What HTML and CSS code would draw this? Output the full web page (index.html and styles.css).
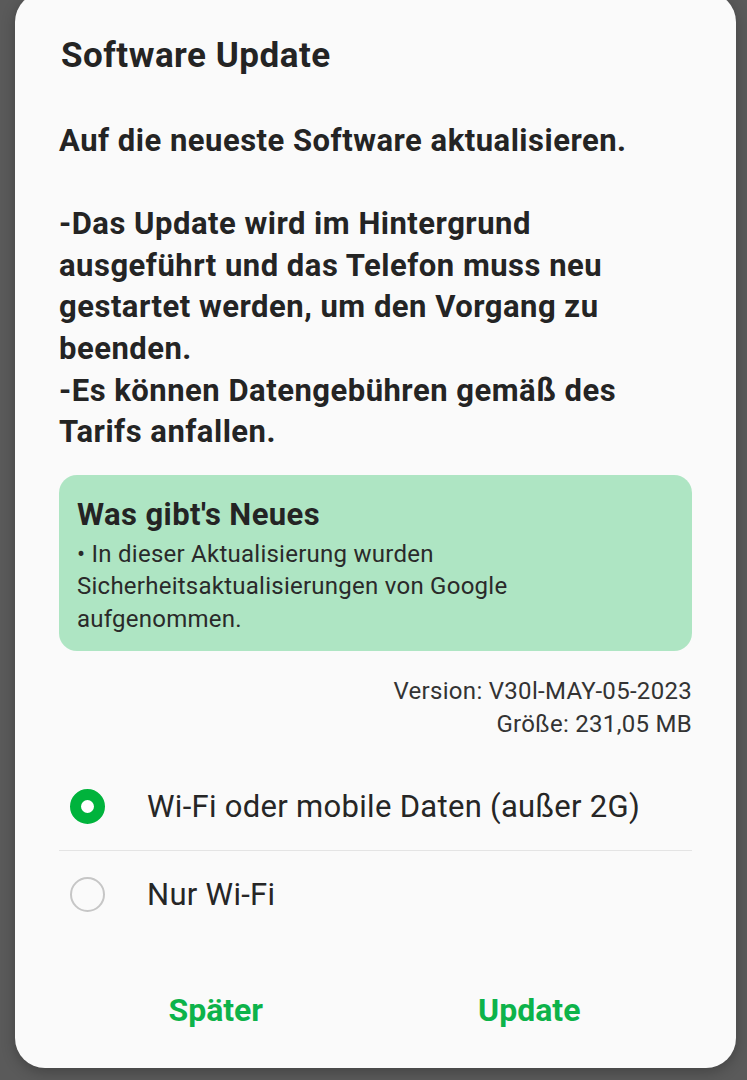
FILE: index.html
```html
<!DOCTYPE html>
<html lang="de">
<head>
<meta charset="utf-8">
<title>Software Update</title>
<link rel="stylesheet" href="styles.css">
</head>
<body>
<div class="dialog">
  <h1 class="title">Software Update</h1>
  <div class="message">
    <p>Auf die neueste Software aktualisieren.</p>
    <p>-Das Update wird im Hintergrund ausgeführt und das Telefon muss neu gestartet werden, um den Vorgang zu beenden.<br>-Es können Datengebühren gemäß des Tarifs anfallen.</p>
  </div>
  <div class="news">
    <div class="news-title">Was gibt's Neues</div>
    <div class="news-body">• In dieser Aktualisierung wurden Sicherheitsaktualisierungen von Google aufgenommen.</div>
  </div>
  <div class="meta">
    <div>Version: V30l-MAY-05-2023</div>
    <div>Größe: 231,05 MB</div>
  </div>
  <div class="options">
    <div class="option">
      <span class="radio checked"></span>
      <span class="option-label">Wi-Fi oder mobile Daten (außer 2G)</span>
    </div>
    <div class="option">
      <span class="radio"></span>
      <span class="option-label">Nur Wi-Fi</span>
    </div>
  </div>
  <div class="actions">
    <button class="btn">Später</button>
    <button class="btn">Update</button>
  </div>
</div>
</body>
</html>
```
FILE: styles.css
```css
html, body {
  margin: 0;
  padding: 0;
}
body {
  background: #5a5a5a;
  font-family: Roboto, "Noto Sans", sans-serif;
  height: 1080px;
  overflow: hidden;
}
.dialog {
  margin: -8px 11px 0 15px;
  height: 1076px;
  box-sizing: border-box;
  background: #fafafa;
  border-radius: 30px;
  padding: 0 44px;
  display: flex;
  flex-direction: column;
  color: #242424;
  box-shadow: 0 4px 14px rgba(0, 0, 0, 0.25);
}
.title {
  margin: 0;
  padding: 44px 0 0 2px;
  font-size: 35px;
  font-weight: 700;
  line-height: 40px;
  letter-spacing: 0.5px;
  color: #242424;
}
.message {
  margin-top: 43.5px;
  font-size: 31px;
  font-weight: 700;
  line-height: 41.7px;
  letter-spacing: 0.5px;
}
.message p {
  margin: 0 0 41.7px 0;
}
.message p:last-child {
  margin-bottom: 0;
}
.news {
  margin-top: 22px;
  background: #aee5c3;
  border-radius: 18px;
  padding: 22px 30px 16px 18px;
}
.news-title {
  font-size: 31px;
  font-weight: 700;
  line-height: 36px;
  letter-spacing: 0.4px;
}
.news-body {
  margin-top: 4.4px;
  font-size: 24px;
  line-height: 32.5px;
  letter-spacing: 0.25px;
  color: #2a2a2a;
}
.meta {
  margin-top: 24px;
  text-align: right;
  font-size: 24px;
  line-height: 32.5px;
  letter-spacing: 0.3px;
  color: #333333;
}
.options {
  margin-top: 23px;
}
.option {
  display: flex;
  align-items: center;
  height: 87px;
  box-sizing: border-box;
}
.option + .option {
  border-top: 1px solid #e4e4e4;
}
.radio {
  width: 35px;
  height: 35px;
  box-sizing: border-box;
  border-radius: 50%;
  border: 2.5px solid #c6c6c6;
  margin-left: 11px;
  margin-right: 42px;
  flex: none;
}
.radio.checked {
  border: 11px solid #00b33c;
  background: #ffffff;
}
.option-label {
  font-size: 31px;
  letter-spacing: 0.3px;
  color: #262626;
}
.actions {
  margin-top: auto;
  display: flex;
  padding: 0 6px 38px 0;
}
.btn {
  flex: 1;
  background: none;
  border: none;
  font-family: Roboto, "Noto Sans", sans-serif;
  font-size: 32px;
  font-weight: 700;
  line-height: 40px;
  color: #0db34a;
  padding: 0;
}
```
